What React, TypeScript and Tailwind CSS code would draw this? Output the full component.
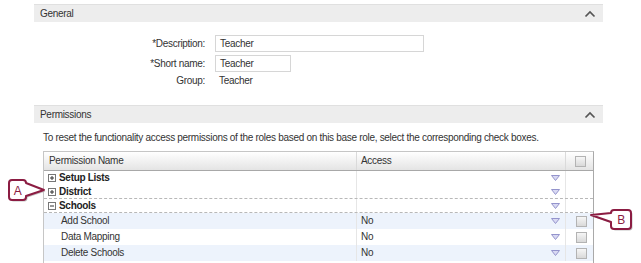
import React from 'react';

const rows = [
  { name: 'Add School', access: 'No', bg: 'bg-[#edf3fc]' },
  { name: 'Data Mapping', access: 'No', bg: 'bg-white' },
  { name: 'Delete Schools', access: 'No', bg: 'bg-[#edf3fc]' },
];

function ChevronUp() {
  return (
    <svg width="12" height="8" viewBox="0 0 12 8">
      <path d="M1.5 6.5 L6 2 L10.5 6.5" fill="none" stroke="#555" strokeWidth="1.7" />
    </svg>
  );
}

function Caret() {
  return (
    <svg width="9" height="6" viewBox="0 0 9 6">
      <polygon points="0.5,0.5 8.5,0.5 4.5,5.5" fill="#d9d9f3" stroke="#9494cc" strokeWidth="1" />
    </svg>
  );
}

function Check() {
  return <span className="block w-[11px] h-[11px] border border-[#b3b3b3] bg-linear-to-b from-[#f6f6f6] to-[#d9d9d9]" />;
}

function Expander({ open }: { open?: boolean }) {
  return (
    <svg width="8" height="8" viewBox="0 0 8 8" className="shrink-0">
      <rect x="0.5" y="0.5" width="7" height="7" fill="white" stroke="#777" />
      <line x1="2" y1="4" x2="6" y2="4" stroke="#333" />
      {!open && <line x1="4" y1="2" x2="4" y2="6" stroke="#333" />}
    </svg>
  );
}

function SectionBar({ title }: { title: string }) {
  return (
    <div className="flex items-center justify-between h-[18px] bg-[#ededed] border-t border-[#e0e0e0] pl-[6px] pr-[7px]">
      <span>{title}</span>
      <ChevronUp />
    </div>
  );
}

function Callout({ letter, flip }: { letter: string; flip?: boolean }) {
  // rounded box with a wedge pointing at the thing it names
  const path = flip
    ? 'M24 3 h14 a3 3 0 0 1 3 3 v13 a3 3 0 0 1 -3 3 h-14 a3 3 0 0 1 -3 -3 v-4 L1 8 L21 6 a3 3 0 0 1 3 -3 Z'
    : 'M6 3 h11 a3 3 0 0 1 3 3 L38 13 L20 19 v1 a3 3 0 0 1 -3 3 h-11 a3 3 0 0 1 -3 -3 v-14 a3 3 0 0 1 3 -3 Z';
  return (
    <svg width="46" height="28" viewBox="0 0 46 28">
      <path d={path} transform="translate(1.5 1.5)" fill="#c4c4c4" />
      <path d={path} fill="white" stroke="#8b1c42" strokeWidth="2" strokeLinejoin="round" />
      <text
        x={flip ? 31 : 11.5}
        y={flip ? 17 : 18}
        textAnchor="middle"
        fontSize="12"
        fill="#8b1c42"
        fontFamily="Liberation Sans, Arial, sans-serif"
      >
        {letter}
      </text>
    </svg>
  );
}

export default function App() {
  return (
    <div className="relative w-[641px] h-[263px] overflow-hidden bg-white text-[10px] tracking-[-0.3px] leading-none text-[#333] font-['Liberation_Sans',Arial,sans-serif]">
      <div className="ml-[34px] w-[569px] pt-[4px]">
        <SectionBar title="General" />

        {/* General form */}
        <div className="mt-[13px] flex flex-col">
          <div className="flex items-center h-[17px]">
            <span className="w-[171px] text-right">*Description:</span>
            <div className="ml-[10px] w-[209px] h-[17px] border border-[#d6d6d6] px-[4px] flex items-center">Teacher</div>
          </div>
          <div className="flex items-center h-[17px] mt-[3px]">
            <span className="w-[171px] text-right">*Short name:</span>
            <div className="ml-[10px] w-[76px] h-[17px] border border-[#d6d6d6] px-[4px] flex items-center">Teacher</div>
          </div>
          <div className="flex items-center h-[15px] mt-[1px]">
            <span className="w-[171px] text-right">Group:</span>
            <span className="ml-[14px]">Teacher</span>
          </div>
        </div>

        <div className="mt-[17px]">
          <SectionBar title="Permissions" />
        </div>

        <p className="mt-[10px] ml-[9px]">
          To reset the functionality access permissions of the roles based on this base role, select the corresponding check boxes.
        </p>

        {/* Permissions table */}
        <div className="mt-[8px] ml-[9px] w-[551px] h-[130px] border-l border-r border-t border-l-[#c6c6c6] border-r-[#a9a9a9] border-t-[#c6c6c6]">
          <div className="grid grid-cols-[313px_209px_27px] h-[19px] bg-linear-to-b from-white to-[#e4e4e4] border-b border-[#a8a8a8]">
            <div className="flex items-center pl-[5px] border-r border-[#dadada]">Permission Name</div>
            <div className="flex items-center pl-[4px] border-r border-[#dadada]">Access</div>
            <div className="flex items-center justify-center pl-[2px]">
              <Check />
            </div>
          </div>

          {[
            { name: 'Setup Lists', open: false, line: false },
            { name: 'District', open: false, line: true },
            { name: 'Schools', open: true, line: true },
          ].map((g) => (
            <div
              key={g.name}
              className={`grid grid-cols-[313px_209px_27px] h-[14px] ${g.line ? 'border-b border-dashed border-[#b8b8b8]' : ''}`}
            >
              <div className="flex items-center gap-[3px] pl-[4px] font-bold text-[#222] border-r border-[#e6e6e6]">
                <Expander open={g.open} />
                {g.name}
              </div>
              <div className="flex items-center justify-end pr-[5px] border-r border-[#e6e6e6]">
                <Caret />
              </div>
              <div />
            </div>
          ))}

          {rows.map((r) => (
            <div key={r.name} className={`grid grid-cols-[313px_209px_27px] h-[16px] ${r.bg}`}>
              <div className="flex items-center pl-[17px] border-r border-[#e6e6e6]">{r.name}</div>
              <div className="flex items-center justify-between pl-[4px] pr-[5px] border-r border-[#e6e6e6]">
                <span>{r.access}</span>
                <Caret />
              </div>
              <div className="flex items-center justify-center pl-[4px]">
                <Check />
              </div>
            </div>
          ))}
        </div>
      </div>

      {/* Callouts */}
      <div className="absolute left-[6px] top-[177px]">
        <Callout letter="A" />
      </div>
      <div className="absolute left-[590px] top-[207px]">
        <Callout letter="B" flip />
      </div>
    </div>
  );
}
